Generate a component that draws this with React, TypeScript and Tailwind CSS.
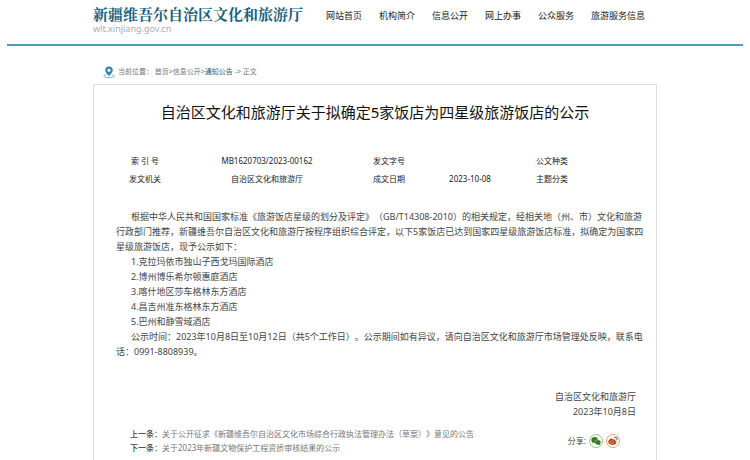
const navItems = ["网站首页", "机构简介", "信息公开", "网上办事", "公众服务", "旅游服务信息"];

const hotels = [
  "1.克拉玛依市独山子西戈玛国际酒店",
  "2.博州博乐希尔顿惠庭酒店",
  "3.喀什地区莎车格林东方酒店",
  "4.昌吉州准东格林东方酒店",
  "5.巴州和静雪域酒店",
];

const meta = [
  [
    { label: "索 引 号", value: "MB1620703/2023-00162" },
    { label: "发文字号", value: "" },
    { label: "公文种类", value: "" },
  ],
  [
    { label: "发文机关", value: "自治区文化和旅游厅" },
    { label: "成文日期", value: "2023-10-08" },
    { label: "主题分类", value: "" },
  ],
];

function PinIcon() {
  return (
    <svg viewBox="0 0 24 24" className="h-3 w-3 shrink-0" aria-hidden="true">
      <path
        d="M7 17.5C3.500 18 1.500 19 1.500 20.300C1.500 22 6 23 12 23s10.500-1 10.500-2.700c0-1.300-2-2.300-5.500-2.800"
        fill="none"
        stroke="#6aaccb"
        strokeWidth="1.800"
      />
      <path
        fillRule="evenodd"
        fill="#2f86b0"
        d="M12 1a7.500 7.500 0 0 0-7.500 7.500C4.500 13.500 12 20 12 20s7.500-6.500 7.500-11.500A7.500 7.500 0 0 0 12 1Zm0 4.300a3.200 3.200 0 1 1 0 6.400 3.200 3.200 0 0 1 0-6.400Z"
      />
    </svg>
  );
}

function WechatIcon() {
  return (
    <svg viewBox="0 0 20 20" className="h-2.5 w-2.5" fill="currentColor" aria-hidden="true">
      <path d="M7.500 2C3.400 2 .5 4.600.5 7.900c0 1.900 1 3.500 2.600 4.600L2.500 15l2.700-1.400c.8.200 1.500.300 2.300.300C7 10 10 7 14.300 6.900 13.600 4 10.900 2 7.500 2Z" />
      <path d="M13.800 7.800c-3.300 0-5.800 2.200-5.800 4.900s2.500 4.900 5.800 4.900c.7 0 1.300-.1 1.900-.3l2.300 1.200-.6-2c1.300-.9 2.200-2.300 2.200-3.800 0-2.700-2.500-4.900-5.800-4.900Z" />
    </svg>
  );
}

function WeiboIcon() {
  return (
    <svg viewBox="0 0 20 20" className="h-2.5 w-2.5" aria-hidden="true">
      <path
        fill="currentColor"
        d="M8.500 6.500C8.800 4.500 7.500 4 5.500 5 2.800 6.500.5 9.500.5 12.200.5 15.500 4 18 8.500 18c5 0 8.300-2.800 8.300-5.500 0-1.700-1.200-2.500-2.500-2.900.6-2-.5-3.600-3.300-3.300-1 .1-1.800.4-2.500.2Z"
      />
      <ellipse cx="8" cy="12.800" rx="3.600" ry="2.800" fill="none" stroke="#f3c3ac" strokeWidth="1" />
      <path
        d="M13 2.500c3.500-.7 6 2 5 5.500"
        fill="none"
        stroke="currentColor"
        strokeWidth="2.200"
        strokeLinecap="round"
      />
    </svg>
  );
}

function Header() {
  return (
    <header className="mx-[7px] border-b-2 border-[#4c9bc0] pt-1">
      <div className="mx-auto flex h-10 max-w-[564px]">
        <a href="#home" className="block shrink-0 whitespace-nowrap">
          <span className="block font-['Noto_Serif_CJK_SC','Noto_Serif_SC','Noto_Sans_CJK_SC',serif] text-[15px] leading-5 font-bold text-[#17607f]">
            新疆维吾尔自治区文化和旅游厅
          </span>
          <span className="block text-[9px] leading-[9px] text-[#ababab]">wlt.xinjiang.gov.cn</span>
        </a>
        <nav className="ml-auto flex gap-[17px] pt-1 pr-3 text-[9px] leading-4 text-[#222]">
          {navItems.map((item) => (
            <a key={item} href="#nav" className="whitespace-nowrap">
              {item}
            </a>
          ))}
        </nav>
      </div>
    </header>
  );
}

export default function App() {
  return (
    <div className="flex min-h-screen flex-col bg-white font-['Noto_Sans','Noto_Sans_CJK_SC',sans-serif] text-[#333] [text-spacing-trim:space-all]">
      <Header />
      <main className="mx-auto flex w-full max-w-[564px] grow flex-col pt-5">
        <div className="flex h-[18px] items-start gap-[3px] pl-[10px] text-[7px] leading-3 text-[#777]">
          <PinIcon />
          <nav className="whitespace-nowrap">
            当前位置： <a href="#home">首页</a>&gt;<a href="#info">信息公开</a>&gt;
            <a href="#notice" className="text-[#286180]">通知公告</a> -&gt; 正文
          </nav>
        </div>

        <article className="grow border border-b-0 border-[#dedede] pt-[15px]">
          <h1 className="text-center text-[15px] leading-6 text-[#111]">
            自治区文化和旅游厅关于拟确定5家饭店为四星级旅游饭店的公示
          </h1>

          <table className="mt-7 ml-3 w-[540px] table-fixed text-center text-[8px] text-[#222]">
            <colgroup>
              <col className="w-[78px]" />
              <col className="w-[166px]" />
              <col className="w-[78px]" />
              <col className="w-[84px]" />
              <col className="w-[80px]" />
              <col />
            </colgroup>
            <tbody>
              {meta.map((row) => (
                <tr key={row[0].label} className="h-[18px]">
                  {row.flatMap((cell) => [
                    <th key={cell.label} scope="row" className="font-normal">
                      {cell.label}
                    </th>,
                    <td key={cell.label + "-value"}>{cell.value}</td>,
                  ])}
                </tr>
              ))}
            </tbody>
          </table>

          <div className="mt-[21px] pr-[10px] pl-[22px] text-[9px] leading-[15px] text-[#444]">
            <p className="indent-[15px]">
              根据中华人民共和国国家标准《旅游饭店星级的划分及评定》（GB/T14308-2010）的相关规定，经相关地（州、市）文化和旅游行政部门推荐，新疆维吾尔自治区文化和旅游厅按程序组织综合评定，以下5家饭店已达到国家四星级旅游饭店标准，拟确定为国家四星级旅游饭店，现予公示如下：
            </p>
            {hotels.map((hotel) => (
              <p key={hotel} className="indent-[15px]">
                {hotel}
              </p>
            ))}
            <p className="indent-[15px]">
              公示时间：2023年10月8日至10月12日（共5个工作日）。公示期间如有异议，请向自治区文化和旅游厅市场管理处反映，联系电话：0991-8808939。
            </p>
            <div className="mt-[30px] pr-[10px] text-right">
              <p>自治区文化和旅游厅</p>
              <p>2023年10月8日</p>
            </div>
          </div>

          <footer className="mt-2 flex items-start justify-between pr-9 pl-9 text-[8px] leading-[14px] text-[#777]">
            <div>
              <p>
                <span className="font-medium text-[#444]">上一条：</span>
                <a href="#prev">关于公开征求《新疆维吾尔自治区文化市场综合行政执法管理办法（草案）》意见的公告</a>
              </p>
              <p>
                <span className="font-medium text-[#444]">下一条：</span>
                <a href="#next">关于2023年新疆文物保护工程资质审核结果的公示</a>
              </p>
            </div>
            <div className="mt-[7px] flex items-center gap-[3px] whitespace-nowrap text-[#444]">
              <span>分享:</span>
              <button
                type="button"
                aria-label="微信"
                className="flex h-3.5 w-3.5 items-center justify-center rounded-full border border-[#8dcc70] text-[#357a20]"
              >
                <WechatIcon />
              </button>
              <button
                type="button"
                aria-label="微博"
                className="flex h-3.5 w-3.5 items-center justify-center rounded-full border border-[#f4a07c] text-[#b8481a]"
              >
                <WeiboIcon />
              </button>
            </div>
          </footer>
        </article>
      </main>
    </div>
  );
}
